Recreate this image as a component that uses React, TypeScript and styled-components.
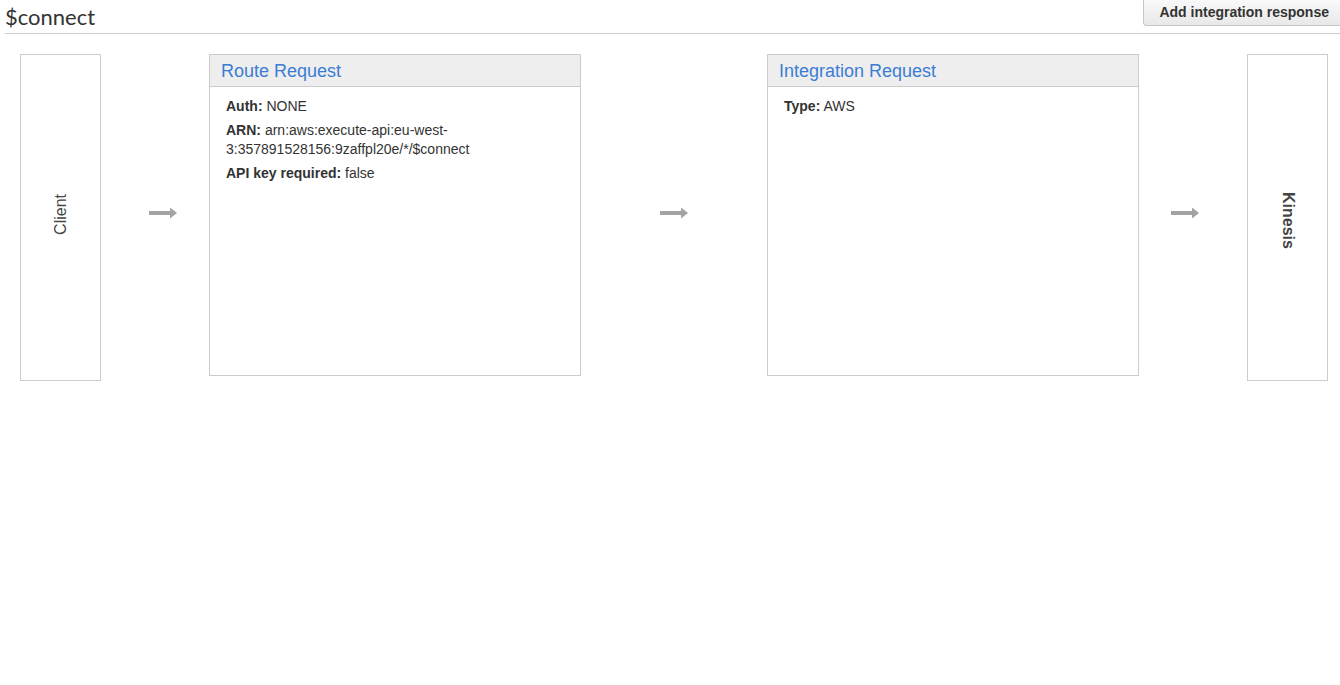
import React from 'react';
import styled, { createGlobalStyle } from 'styled-components';

const GlobalStyle = createGlobalStyle`
  html, body {
    margin: 0;
    padding: 0;
    background: #fff;
  }
  body {
    font-family: 'Liberation Sans', Arial, sans-serif;
    font-size: 14px;
    color: #333;
  }
`;

interface Field {
  label: string;
  value: string;
}

const routeFields: Field[] = [
  { label: 'Auth:', value: 'NONE' },
  { label: 'ARN:', value: 'arn:aws:execute-api:eu-west-3:357891528156:9zaffpl20e/*/$connect' },
  { label: 'API key required:', value: 'false' },
];

const integrationFields: Field[] = [{ label: 'Type:', value: 'AWS' }];

const Arrow: React.FC = () => (
  <svg width="28" height="12" viewBox="0 0 28 12">
    <rect x="0" y="4" width="22" height="4" fill="#a3a3a3" />
    <polygon points="21,0.5 28,6 21,11.5" fill="#a3a3a3" />
  </svg>
);

const Card: React.FC<{ title: string; fields: Field[] }> = ({ title, fields }) => (
  <CardBox>
    <CardHeader>{title}</CardHeader>
    <CardBody>
      {fields.map((f) => (
        <FieldRow key={f.label}>
          <b>{f.label}</b> {f.value}
        </FieldRow>
      ))}
    </CardBody>
  </CardBox>
);

export default function App() {
  return (
    <Page>
      <GlobalStyle />
      <TitleBar>
        <Title>$connect</Title>
        <ActionButton>Add integration response</ActionButton>
      </TitleBar>
      <Flow>
        <EndBox>
          <EndLabel>Client</EndLabel>
        </EndBox>
        <ArrowCell width={108} offset={48}>
          <Arrow />
        </ArrowCell>
        <Card title="Route Request" fields={routeFields} />
        <ArrowCell width={186} offset={79}>
          <Arrow />
        </ArrowCell>
        <Card title="Integration Request" fields={integrationFields} />
        <ArrowCell width={108} offset={32}>
          <Arrow />
        </ArrowCell>
        <EndBox>
          <EndLabel bold down>
            Kinesis
          </EndLabel>
        </EndBox>
      </Flow>
    </Page>
  );
}

const Page = styled.div`
  width: 1340px;
  height: 685px;
  overflow: hidden;
`;

const TitleBar = styled.div`
  display: flex;
  align-items: flex-start;
  justify-content: space-between;
  margin-left: 5px;
  height: 33px;
  border-bottom: 1px solid #ccc;
`;

const Title = styled.h2`
  margin: 0;
  padding-top: 3px;
  font-family: Lato, 'Liberation Sans', sans-serif;
  font-weight: 400;
  font-size: 22px;
  line-height: 28px;
  color: #333;
`;

const ActionButton = styled.button`
  box-sizing: border-box;
  height: 28px;
  margin-top: -2px;
  padding: 0 11px 0 15px;
  border: 1px solid #c6c6c6;
  border-right: none;
  border-radius: 0 0 0 4px;
  background: linear-gradient(#fafafa, #e8e8e8);
  font-family: 'Liberation Sans', Arial, sans-serif;
  font-weight: 700;
  font-size: 14px;
  color: #333;
  cursor: pointer;
`;

const Flow = styled.div`
  display: flex;
  align-items: flex-start;
  padding: 20px 0 0 20px;
`;

const EndBox = styled.div`
  box-sizing: border-box;
  width: 81px;
  height: 327px;
  border: 1px solid #ccc;
  display: flex;
  align-items: center;
  justify-content: center;
`;

const EndLabel = styled.span<{ bold?: boolean; down?: boolean }>`
  writing-mode: vertical-rl;
  transform: ${({ down }) => (down ? 'none' : 'rotate(180deg)')};
  font-size: 16px;
  font-weight: ${({ bold }) => (bold ? 700 : 400)};
  color: #444;
  margin-top: ${({ down }) => (down ? '6px' : '-7px')};
`;

const ArrowCell = styled.div<{ width: number; offset: number }>`
  flex: none;
  width: ${({ width }) => width}px;
  height: 322px;
  padding-left: ${({ offset }) => offset}px;
  box-sizing: border-box;
  display: flex;
  align-items: center;
  svg {
    display: block;
    margin-top: -4px;
  }
`;

const CardBox = styled.div`
  box-sizing: border-box;
  width: 372px;
  height: 322px;
  border: 1px solid #ccc;
  flex: none;
`;

const CardHeader = styled.div`
  height: 31px;
  padding: 0 11px;
  background: #eee;
  border-bottom: 1px solid #ccc;
  font-size: 18px;
  line-height: 32px;
  color: #3b7dd4;
`;

const CardBody = styled.div`
  padding: 10px 16px;
`;

const FieldRow = styled.div`
  line-height: 19px;
  margin-bottom: 5px;
  color: #333;
  b {
    font-weight: 700;
  }
`;
